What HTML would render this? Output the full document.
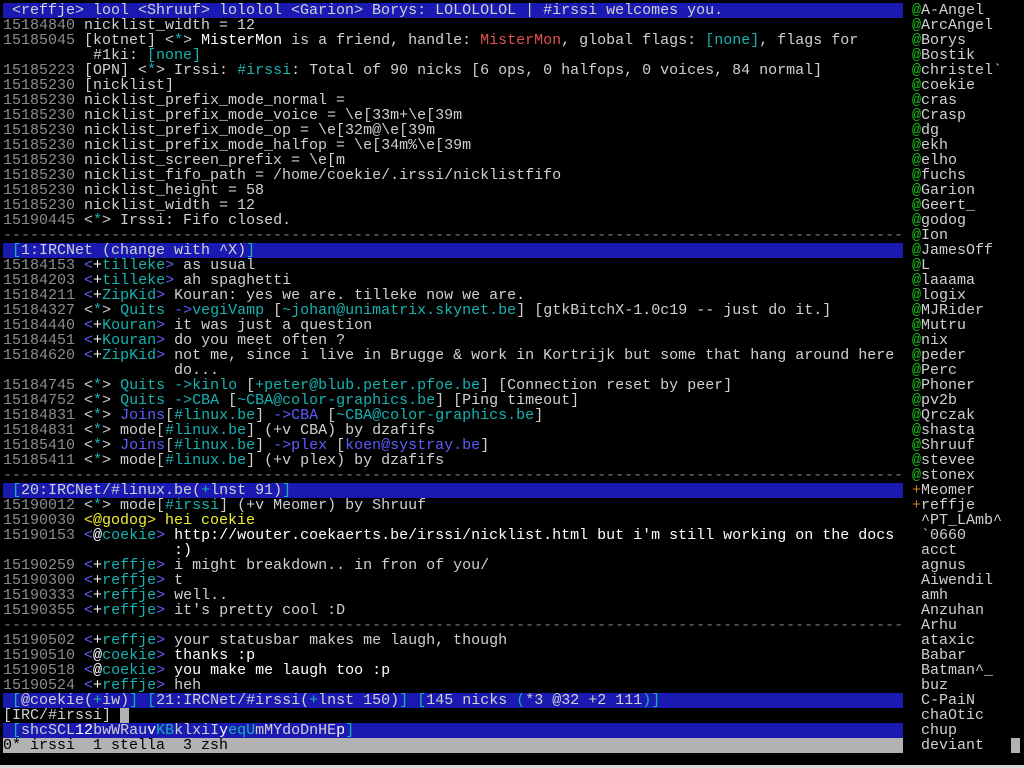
<!DOCTYPE html>
<html><head><meta charset="utf-8"><style>
html,body{margin:0;padding:0;background:#000;width:1024px;height:768px;overflow:hidden;position:relative}
.l{position:absolute;left:3px;height:15px;line-height:15px;font-family:"Liberation Mono",monospace;font-size:15px;white-space:pre;color:#d0d0d0}
.bar{width:900px;background:#1a1ab2}
.gbar{width:900px;background:#b2b2b2;color:#000}
.n{position:absolute;left:912px;height:15px;line-height:15px;font-family:"Liberation Mono",monospace;font-size:15px;white-space:pre;color:#d0d0d0}
.t{color:#8c8c8c}.c{color:#18b2b2}.b{color:#5c5cff}.w{color:#fff}.y{color:#f0f030}.r{color:#e05050}.g{color:#18c018}.o{color:#d08020}.d{color:#7a7a7a}
.cur{display:inline-block;width:9px;height:15px;background:#b2b2b2;vertical-align:top}
</style></head><body>
<div class="l bar" style="top:3px"> &lt;reffje&gt; lool &lt;Shruuf&gt; lololol &lt;Garion&gt; Borys: LOLOLOLOL | #irssi welcomes you.</div>
<div class="l" style="top:18px"><span class="t">15184840</span> nicklist_width = 12</div>
<div class="l" style="top:33px"><span class="t">15185045</span> [kotnet] &lt;<span class="c">*</span>&gt; <span class="w">MisterMon</span> is a friend, handle: <span class="r">MisterMon</span>, global flags: <span class="c">[none]</span>, flags for</div>
<div class="l" style="top:48px">          #1ki: <span class="c">[none]</span></div>
<div class="l" style="top:63px"><span class="t">15185223</span> [OPN] &lt;<span class="c">*</span>&gt; Irssi: <span class="c">#irssi</span>: Total of 90 nicks [6 ops, 0 halfops, 0 voices, 84 normal]</div>
<div class="l" style="top:78px"><span class="t">15185230</span> [nicklist]</div>
<div class="l" style="top:93px"><span class="t">15185230</span> nicklist_prefix_mode_normal =</div>
<div class="l" style="top:108px"><span class="t">15185230</span> nicklist_prefix_mode_voice = \e[33m+\e[39m</div>
<div class="l" style="top:123px"><span class="t">15185230</span> nicklist_prefix_mode_op = \e[32m@\e[39m</div>
<div class="l" style="top:138px"><span class="t">15185230</span> nicklist_prefix_mode_halfop = \e[34m%\e[39m</div>
<div class="l" style="top:153px"><span class="t">15185230</span> nicklist_screen_prefix = \e[m</div>
<div class="l" style="top:168px"><span class="t">15185230</span> nicklist_fifo_path = /home/coekie/.irssi/nicklistfifo</div>
<div class="l" style="top:183px"><span class="t">15185230</span> nicklist_height = 58</div>
<div class="l" style="top:198px"><span class="t">15185230</span> nicklist_width = 12</div>
<div class="l" style="top:213px"><span class="t">15190445</span> &lt;<span class="c">*</span>&gt; Irssi: Fifo closed.</div>
<div class="l d" style="top:228px">----------------------------------------------------------------------------------------------------</div>
<div class="l bar" style="top:243px"> <span class="c">[</span>1:IRCNet (change with ^X)<span class="c">]</span></div>
<div class="l" style="top:258px"><span class="t">15184153</span> <span class="b">&lt;</span><span class="w">+</span><span class="c">tilleke</span><span class="b">&gt;</span> as usual</div>
<div class="l" style="top:273px"><span class="t">15184203</span> <span class="b">&lt;</span><span class="w">+</span><span class="c">tilleke</span><span class="b">&gt;</span> ah spaghetti</div>
<div class="l" style="top:288px"><span class="t">15184211</span> <span class="b">&lt;</span><span class="w">+</span><span class="c">ZipKid</span><span class="b">&gt;</span> Kouran: yes we are. tilleke now we are.</div>
<div class="l" style="top:303px"><span class="t">15184327</span> &lt;<span class="c">*</span>&gt; <span class="c">Quits</span> <span class="b">-&gt;</span><span class="c">vegiVamp</span> [<span class="c">~johan@unimatrix.skynet.be</span>] [gtkBitchX-1.0c19 -- just do it.]</div>
<div class="l" style="top:318px"><span class="t">15184440</span> <span class="b">&lt;</span><span class="w">+</span><span class="c">Kouran</span><span class="b">&gt;</span> it was just a question</div>
<div class="l" style="top:333px"><span class="t">15184451</span> <span class="b">&lt;</span><span class="w">+</span><span class="c">Kouran</span><span class="b">&gt;</span> do you meet often ?</div>
<div class="l" style="top:348px"><span class="t">15184620</span> <span class="b">&lt;</span><span class="w">+</span><span class="c">ZipKid</span><span class="b">&gt;</span> not me, since i live in Brugge &amp; work in Kortrijk but some that hang around here</div>
<div class="l" style="top:363px">                   do...</div>
<div class="l" style="top:378px"><span class="t">15184745</span> &lt;<span class="c">*</span>&gt; <span class="c">Quits -&gt;kinlo</span> [<span class="c">+peter@blub.peter.pfoe.be</span>] [Connection reset by peer]</div>
<div class="l" style="top:393px"><span class="t">15184752</span> &lt;<span class="c">*</span>&gt; <span class="c">Quits -&gt;CBA</span> [<span class="c">~CBA@color-graphics.be</span>] [Ping timeout]</div>
<div class="l" style="top:408px"><span class="t">15184831</span> &lt;<span class="c">*</span>&gt; <span class="b">Joins</span>[<span class="c">#linux.be</span>] <span class="b">-&gt;CBA</span> [<span class="c">~CBA@color-graphics.be</span>]</div>
<div class="l" style="top:423px"><span class="t">15184831</span> &lt;<span class="c">*</span>&gt; mode[<span class="c">#linux.be</span>] (+v CBA) by dzafifs</div>
<div class="l" style="top:438px"><span class="t">15185410</span> &lt;<span class="c">*</span>&gt; <span class="b">Joins</span>[<span class="c">#linux.be</span>] <span class="b">-&gt;plex</span> [<span class="b">koen@systray.be</span>]</div>
<div class="l" style="top:453px"><span class="t">15185411</span> &lt;<span class="c">*</span>&gt; mode[<span class="c">#linux.be</span>] (+v plex) by dzafifs</div>
<div class="l d" style="top:468px">----------------------------------------------------------------------------------------------------</div>
<div class="l bar" style="top:483px"> <span class="c">[</span>20:IRCNet/#linux.be(<span class="c">+</span>lnst 91)<span class="c">]</span></div>
<div class="l" style="top:498px"><span class="t">15190012</span> &lt;<span class="c">*</span>&gt; mode[<span class="c">#irssi</span>] (+v Meomer) by Shruuf</div>
<div class="l y" style="top:513px"><span class="t">15190030</span> &lt;@godog&gt; hei coekie</div>
<div class="l w" style="top:528px"><span class="t">15190153</span> <span class="b">&lt;</span>@<span class="c">coekie</span><span class="b">&gt;</span> http://wouter.coekaerts.be/irssi/nicklist.html but i'm still working on the docs</div>
<div class="l w" style="top:543px">                   :)</div>
<div class="l" style="top:558px"><span class="t">15190259</span> <span class="b">&lt;</span><span class="w">+</span><span class="c">reffje</span><span class="b">&gt;</span> i might breakdown.. in fron of you/</div>
<div class="l" style="top:573px"><span class="t">15190300</span> <span class="b">&lt;</span><span class="w">+</span><span class="c">reffje</span><span class="b">&gt;</span> t</div>
<div class="l" style="top:588px"><span class="t">15190333</span> <span class="b">&lt;</span><span class="w">+</span><span class="c">reffje</span><span class="b">&gt;</span> well..</div>
<div class="l" style="top:603px"><span class="t">15190355</span> <span class="b">&lt;</span><span class="w">+</span><span class="c">reffje</span><span class="b">&gt;</span> it's pretty cool :D</div>
<div class="l d" style="top:618px">----------------------------------------------------------------------------------------------------</div>
<div class="l" style="top:633px"><span class="t">15190502</span> <span class="b">&lt;</span><span class="w">+</span><span class="c">reffje</span><span class="b">&gt;</span> your statusbar makes me laugh, though</div>
<div class="l w" style="top:648px"><span class="t">15190510</span> <span class="b">&lt;</span>@<span class="c">coekie</span><span class="b">&gt;</span> thanks :p</div>
<div class="l w" style="top:663px"><span class="t">15190518</span> <span class="b">&lt;</span>@<span class="c">coekie</span><span class="b">&gt;</span> you make me laugh too :p</div>
<div class="l" style="top:678px"><span class="t">15190524</span> <span class="b">&lt;</span><span class="w">+</span><span class="c">reffje</span><span class="b">&gt;</span> heh</div>
<div class="l bar" style="top:693px"> <span class="c">[</span>@coekie(<span class="c">+</span>iw)<span class="c">]</span> <span class="c">[</span>21:IRCNet/#irssi(<span class="c">+</span>lnst 150)<span class="c">]</span> <span class="c">[</span>145 nicks <span class="c">(</span>*3 @32 +2 111<span class="c">)]</span></div>
<div class="l" style="top:708px">[IRC/#irssi] <span class="cur"></span></div>
<div class="l bar" style="top:723px"> <span class="c">[</span>shcSCL<span class="w">12</span>bwWRau<span class="w">v</span><span class="c">KB</span>klxiI<span class="w">y</span><span class="c">eqU</span>mMYdoDnHE<span class="w">p</span><span class="c">]</span></div>
<div class="l gbar" style="top:738px">0* irssi  1 stella  3 zsh</div>
<div style="position:absolute;left:1011px;top:738px;width:9px;height:15px;background:#b2b2b2"></div>
<div style="position:absolute;left:0;top:765px;width:1024px;height:3px;background:#d8d8d8"></div>

<div class="n" style="top:3px"><span class="g">@</span>A-Angel</div>
<div class="n" style="top:18px"><span class="g">@</span>ArcAngel</div>
<div class="n" style="top:33px"><span class="g">@</span>Borys</div>
<div class="n" style="top:48px"><span class="g">@</span>Bostik</div>
<div class="n" style="top:63px"><span class="g">@</span>christel`</div>
<div class="n" style="top:78px"><span class="g">@</span>coekie</div>
<div class="n" style="top:93px"><span class="g">@</span>cras</div>
<div class="n" style="top:108px"><span class="g">@</span>Crasp</div>
<div class="n" style="top:123px"><span class="g">@</span>dg</div>
<div class="n" style="top:138px"><span class="g">@</span>ekh</div>
<div class="n" style="top:153px"><span class="g">@</span>elho</div>
<div class="n" style="top:168px"><span class="g">@</span>fuchs</div>
<div class="n" style="top:183px"><span class="g">@</span>Garion</div>
<div class="n" style="top:198px"><span class="g">@</span>Geert_</div>
<div class="n" style="top:213px"><span class="g">@</span>godog</div>
<div class="n" style="top:228px"><span class="g">@</span>Ion</div>
<div class="n" style="top:243px"><span class="g">@</span>JamesOff</div>
<div class="n" style="top:258px"><span class="g">@</span>L</div>
<div class="n" style="top:273px"><span class="g">@</span>laaama</div>
<div class="n" style="top:288px"><span class="g">@</span>logix</div>
<div class="n" style="top:303px"><span class="g">@</span>MJRider</div>
<div class="n" style="top:318px"><span class="g">@</span>Mutru</div>
<div class="n" style="top:333px"><span class="g">@</span>nix</div>
<div class="n" style="top:348px"><span class="g">@</span>peder</div>
<div class="n" style="top:363px"><span class="g">@</span>Perc</div>
<div class="n" style="top:378px"><span class="g">@</span>Phoner</div>
<div class="n" style="top:393px"><span class="g">@</span>pv2b</div>
<div class="n" style="top:408px"><span class="g">@</span>Qrczak</div>
<div class="n" style="top:423px"><span class="g">@</span>shasta</div>
<div class="n" style="top:438px"><span class="g">@</span>Shruuf</div>
<div class="n" style="top:453px"><span class="g">@</span>stevee</div>
<div class="n" style="top:468px"><span class="g">@</span>stonex</div>
<div class="n" style="top:483px"><span class="o">+</span>Meomer</div>
<div class="n" style="top:498px"><span class="o">+</span>reffje</div>
<div class="n" style="top:513px"> ^PT_LAmb^</div>
<div class="n" style="top:528px"> `0660</div>
<div class="n" style="top:543px"> acct</div>
<div class="n" style="top:558px"> agnus</div>
<div class="n" style="top:573px"> Aiwendil</div>
<div class="n" style="top:588px"> amh</div>
<div class="n" style="top:603px"> Anzuhan</div>
<div class="n" style="top:618px"> Arhu</div>
<div class="n" style="top:633px"> ataxic</div>
<div class="n" style="top:648px"> Babar</div>
<div class="n" style="top:663px"> Batman^_</div>
<div class="n" style="top:678px"> buz</div>
<div class="n" style="top:693px"> C-PaiN</div>
<div class="n" style="top:708px"> chaOtic</div>
<div class="n" style="top:723px"> chup</div>
<div class="n" style="top:738px"> deviant</div>
</body></html>
